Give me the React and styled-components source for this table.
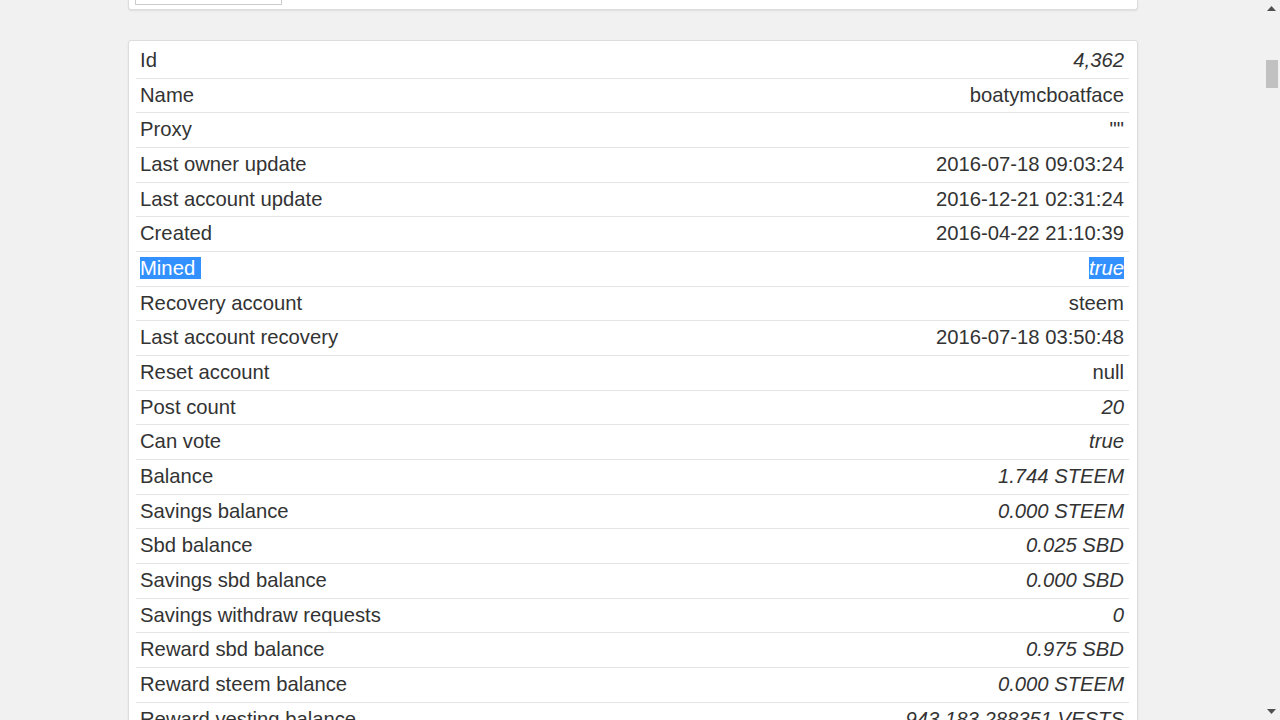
import React from "react";
import styled, { createGlobalStyle } from "styled-components";

const Global = createGlobalStyle`
  html, body { margin: 0; padding: 0; height: 100%; overflow: hidden; }
  body { background: #f1f1f1; font-family: "Liberation Sans", Arial, sans-serif; color: #333; }
  #root { height: 100%; }
`;

const Page = styled.div`
  display: flex;
  height: 720px;
  overflow: hidden;
`;

const Main = styled.div`
  flex: 1;
  display: flex;
  flex-direction: column;
  align-items: flex-start;
  padding-left: 128px;
`;

const Container = styled.div`
  width: 1010px;
  display: flex;
  flex-direction: column;
  gap: 30px;
`;

const TopCard = styled.div`
  height: 10px;
  background: #fff;
  border: 1px solid #dcdcdc;
  border-top: none;
  border-radius: 0 0 3px 3px;
  box-shadow: 0 1px 2px rgba(0,0,0,0.08);
  padding: 0 6px;
  box-sizing: border-box;
`;

const InputStub = styled.div`
  width: 147px;
  height: 5px;
  border: 1px solid #ccc;
  border-top: none;
  box-sizing: border-box;
  background: #fff;
`;

const Card = styled.div`
  background: #fff;
  border: 1px solid #dcdcdc;
  border-radius: 3px;
  box-shadow: 0 1px 2px rgba(0,0,0,0.08);
  padding: 3px 8px 0 7px;
`;

const Table = styled.div`
  display: flex;
  flex-direction: column;
`;

const Row = styled.div`
  display: flex;
  justify-content: space-between;
  align-items: center;
  padding: 3px 5px 3px 4px;
  line-height: 27.67px;
  font-size: 20.25px;
  border-bottom: 1px solid #e4e4e4;
`;

const Label = styled.span`
  white-space: pre;
`;

const Value = styled.span`
  font-style: ${(p) => (p.$italic ? "italic" : "normal")};
  white-space: pre;
`;

const Sel = styled.span`
  background: #3390ff;
  color: #fff;
`;

const Scrollbar = styled.div`
  width: 17px;
  background: #f1f1f1;
  display: flex;
  flex-direction: column;
  align-items: center;
`;

const Arrow = styled.div`
  width: 17px;
  height: 17px;
  display: flex;
  align-items: center;
  justify-content: center;
`;

const Track = styled.div`
  flex: 1;
  width: 100%;
  display: flex;
  justify-content: center;
`;

const Thumb = styled.div`
  width: 12px;
  height: 28px;
  margin-top: 43px;
  background: #c1c1c1;
`;

const rows = [
  ["Id", "4,362", true],
  ["Name", "boatymcboatface", false],
  ["Proxy", '""', false],
  ["Last owner update", "2016-07-18 09:03:24", false],
  ["Last account update", "2016-12-21 02:31:24", false],
  ["Created", "2016-04-22 21:10:39", false],
  ["Mined", "true", true, true],
  ["Recovery account", "steem", false],
  ["Last account recovery", "2016-07-18 03:50:48", false],
  ["Reset account", "null", false],
  ["Post count", "20", true],
  ["Can vote", "true", true],
  ["Balance", "1.744 STEEM", true],
  ["Savings balance", "0.000 STEEM", true],
  ["Sbd balance", "0.025 SBD", true],
  ["Savings sbd balance", "0.000 SBD", true],
  ["Savings withdraw requests", "0", true],
  ["Reward sbd balance", "0.975 SBD", true],
  ["Reward steem balance", "0.000 STEEM", true],
  ["Reward vesting balance", "943,183.288351 VESTS", true],
  ["Reward vesting steem", "0.000 STEEM", true],
];

export default function App() {
  return (
    <>
      <Global />
      <Page>
        <Main>
          <Container>
            <TopCard>
              <InputStub />
            </TopCard>
            <Card>
              <Table>
                {rows.map(([k, v, it, sel]) => (
                  <Row key={k}>
                    <Label>{sel ? <Sel>{k + " "}</Sel> : k}</Label>
                    <Value $italic={it}>{sel ? <Sel>{v}</Sel> : v}</Value>
                  </Row>
                ))}
              </Table>
            </Card>
          </Container>
        </Main>
        <Scrollbar>
          <Arrow>
            <svg width="9" height="5" viewBox="0 0 9 5"><path d="M0 5 L4.5 0 L9 5 Z" fill="#505050" /></svg>
          </Arrow>
          <Track>
            <Thumb />
          </Track>
          <Arrow>
            <svg width="9" height="5" viewBox="0 0 9 5"><path d="M0 0 L4.5 5 L9 0 Z" fill="#505050" /></svg>
          </Arrow>
        </Scrollbar>
      </Page>
    </>
  );
}
